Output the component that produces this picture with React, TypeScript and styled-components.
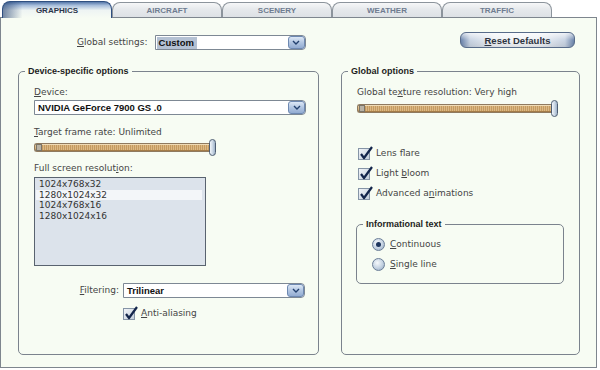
import React from "react";
import styled, { createGlobalStyle } from "styled-components";

const GlobalStyle = createGlobalStyle`
  html, body { margin: 0; padding: 0; background: #ffffff; }
  body { width: 600px; height: 370px; overflow: hidden; font-family: "DejaVu Sans", Verdana, sans-serif; }
  u { text-decoration-thickness: 1px; text-underline-offset: 1px; }
`;

const Root = styled.div`
  width: 600px;
  height: 370px;
  display: flex;
  flex-direction: column;
  background: #ffffff;
`;

const TabBar = styled.div`
  display: flex;
  align-items: flex-end;
  height: 17px;
  padding-left: 2px;
  position: relative;
  z-index: 1;
`;

const Tab = styled.div<{ $active?: boolean }>`
  width: 110px;
  height: ${(p) => (p.$active ? 17 : 15)}px;
  margin-bottom: ${(p) => (p.$active ? -1 : 0)}px;
  box-sizing: border-box;
  display: flex;
  align-items: center;
  justify-content: center;
  padding-top: ${(p) => (p.$active ? 1 : 0)}px;
  font: bold 8px "Liberation Sans", Arial, sans-serif;
  color: ${(p) => (p.$active ? "#2b364b" : "#6f7c90")};
  border: 1px solid ${(p) => (p.$active ? "#2f4f80" : "#8c949c")};
  border-bottom: none;
  border-radius: 8px 8px 0 0;
  background: ${(p) =>
    p.$active
      ? "linear-gradient(90deg, rgba(30,60,110,0.6) 0, rgba(30,60,110,0) 18%), linear-gradient(to bottom, #5678aa 0, #a9bfdc 22%, #eef4f3 52%, #f7fcf3 100%)"
      : "linear-gradient(to bottom, #f6f7f8 0, #e6e9ec 45%, #dde1e5 100%)"};
`;

const Panel = styled.div`
  width: 597px;
  height: 351px;
  box-sizing: border-box;
  border: 1px solid #7e868e;
  background: #f7fcf3;
  display: flex;
  flex-direction: column;
  padding-top: 14px;
`;

const TopRow = styled.div`
  display: flex;
  align-items: flex-start;
  height: 18px;
  padding-left: 76px;
  padding-right: 21px;
`;

const Label = styled.span<{ $mt?: number }>`
  display: block;
  margin-top: ${(p) => p.$mt ?? 0}px;
  font-size: 9px;
  line-height: 11px;
  color: #454545;
  white-space: nowrap;
`;

const InlineLabel = styled(Label)`
  display: inline-block;
`;

const Select = styled.div<{ $w: number; $mt?: number; $ml?: number }>`
  width: ${(p) => p.$w}px;
  height: 15px;
  margin-top: ${(p) => p.$mt ?? 0}px;
  margin-left: ${(p) => p.$ml ?? 0}px;
  box-sizing: border-box;
  border: 1px solid #7d8894;
  border-radius: 0 4px 4px 0;
  background: #ffffff;
  display: flex;
  align-items: center;
  justify-content: space-between;
  flex-shrink: 0;
`;

const SelectValue = styled.span<{ $sel?: boolean }>`
  font: bold 9.5px "Liberation Sans", Arial, sans-serif;
  color: #111;
  padding: 1px 3px 1px 2px;
  margin-left: 1px;
  line-height: 10px;
  background: ${(p) => (p.$sel ? "#b4c1d3" : "transparent")};
`;

const ArrowBtn = styled.div`
  width: 17px;
  height: 13px;
  box-sizing: border-box;
  border: 1px solid #6e89b2;
  border-radius: 3px;
  background: linear-gradient(to bottom, #dde8f6 0, #b2c6e2 50%, #93acd2 100%);
  display: flex;
  align-items: center;
  justify-content: center;
`;

const ResetButton = styled.div`
  margin-left: auto;
  width: 115px;
  height: 16px;
  box-sizing: border-box;
  border: 1px solid #586c8a;
  border-radius: 6px;
  display: flex;
  align-items: center;
  justify-content: center;
  font: bold 9.5px "Liberation Sans", Arial, sans-serif;
  color: #2e3440;
  background: linear-gradient(to bottom, rgba(255, 255, 255, 0.7) 0, rgba(255, 255, 255, 0) 50%, rgba(0, 0, 0, 0.08) 100%),
    linear-gradient(90deg, #6d86ad 0, #c9d4e3 8%, #eef1f5 30%, #f2f4f7 50%, #eef1f5 70%, #c9d4e3 92%, #6d86ad 100%);
`;

const GroupsRow = styled.div`
  display: flex;
  gap: 22px;
  padding-left: 17px;
  margin-top: 21px;
`;

const Group = styled.div<{ $w: number; $h: number; $mt?: number; $ml?: number }>`
  position: relative;
  width: ${(p) => p.$w}px;
  height: ${(p) => p.$h}px;
  margin-top: ${(p) => p.$mt ?? 0}px;
  margin-left: ${(p) => p.$ml ?? 0}px;
  box-sizing: border-box;
  border: 1px solid #7b838d;
  border-radius: 5px;
  display: flex;
  flex-direction: column;
  padding-left: 15px;
`;

const GroupTitle = styled.span`
  position: absolute;
  top: -6px;
  left: 6px;
  padding: 0 3px;
  background: #f7fcf3;
  font: bold 9px "Liberation Sans", Arial, sans-serif;
  line-height: 11px;
  color: #1d1d1d;
`;

const Slider = styled.div<{ $w: number; $mt?: number }>`
  width: ${(p) => p.$w}px;
  height: 17px;
  margin-top: ${(p) => p.$mt ?? 0}px;
  display: flex;
  align-items: center;
`;

const Track = styled.div`
  flex: 1;
  height: 9px;
  box-sizing: border-box;
  border: 1px solid #8f7a5f;
  border-right: none;
  border-radius: 3px 0 0 3px;
  background: repeating-linear-gradient(90deg, #dcb984 0 1px, #c59b60 1px 2px);
  box-shadow: inset 0 1px 0 #f0dcb6, inset 0 -1px 0 #a47c48;
  display: flex;
  align-items: center;
`;

const TrackCap = styled.span`
  width: 4px;
  height: 5px;
  margin-left: 1px;
  background: #b9b3a6;
  border: 1px solid #7b7568;
`;

const Thumb = styled.div`
  width: 7px;
  height: 17px;
  box-sizing: border-box;
  border: 1px solid #4d5d72;
  border-radius: 4px;
  background: linear-gradient(90deg, #f2f6fa 0, #cdd9e6 50%, #9fb2c8 100%);
`;

const ListBox = styled.div`
  width: 172px;
  height: 89px;
  margin-top: 3px;
  box-sizing: border-box;
  border: 1px solid #59636f;
  background: #dce3eb;
  padding: 1px 3px 0 1px;
`;

const ListItem = styled.div<{ $hl?: boolean }>`
  height: 10.5px;
  line-height: 10.5px;
  font-size: 9px;
  color: #333;
  padding-left: 3px;
  background: ${(p) => (p.$hl ? "#f3f6f9" : "transparent")};
`;

const FilterRow = styled.div<{ $mt?: number }>`
  display: flex;
  align-items: center;
  justify-content: flex-end;
  gap: 4px;
  width: 271px;
  margin-top: ${(p) => p.$mt ?? 0}px;
`;

const CheckRow = styled.div<{ $mt?: number; $ml?: number; $gap?: number }>`
  display: flex;
  align-items: center;
  gap: ${(p) => p.$gap ?? 6}px;
  height: 13px;
  margin-top: ${(p) => p.$mt ?? 0}px;
  margin-left: ${(p) => p.$ml ?? 0}px;
`;

const Box = styled.span`
  position: relative;
  width: 12px;
  height: 12px;
  box-sizing: border-box;
  border: 1px solid #8594a6;
  background: linear-gradient(135deg, #f1f4f8 0, #c4cfdb 100%);
  flex-shrink: 0;
  & > svg {
    position: absolute;
    left: 0;
    top: -4px;
    overflow: visible;
  }
`;

const RadioDot = styled.span`
  width: 13px;
  height: 13px;
  box-sizing: border-box;
  border-radius: 50%;
  border: 1px solid #6b7e98;
  background: radial-gradient(circle at 40% 35%, #f6f9fc 0, #c3d1e1 55%, #8ea3bd 100%);
  display: flex;
  align-items: center;
  justify-content: center;
  flex-shrink: 0;
`;

const RadioInner = styled.span`
  width: 5px;
  height: 5px;
  border-radius: 50%;
  background: #1d355d;
`;

const RadioList = styled.div`
  display: flex;
  flex-direction: column;
`;

const Chevron = () => (
  <svg width="8" height="5" viewBox="0 0 8 5">
    <path d="M1 1 L4 4 L7 1" fill="none" stroke="#22406e" strokeWidth="1.4" />
  </svg>
);

const Dropdown: React.FC<{ w: number; value: string; sel?: boolean; mt?: number; ml?: number }> = ({ w, value, sel, mt, ml }) => (
  <Select $w={w} $mt={mt} $ml={ml}>
    <SelectValue $sel={sel}>{value}</SelectValue>
    <ArrowBtn>
      <Chevron />
    </ArrowBtn>
  </Select>
);

const Check: React.FC<{ children: React.ReactNode; mt?: number; ml?: number }> = ({ children, mt, ml }) => (
  <CheckRow $mt={mt} $ml={ml}>
    <Box>
      <svg width="14" height="15" viewBox="0 0 14 15">
        <path d="M2 9 L5 13 L13 2" fill="none" stroke="#13254a" strokeWidth="2.2" strokeLinejoin="round" />
      </svg>
    </Box>
    <InlineLabel>{children}</InlineLabel>
  </CheckRow>
);

const Radio: React.FC<{ children: React.ReactNode; on?: boolean; mt?: number }> = ({ children, on, mt }) => (
  <CheckRow $mt={mt} $ml={0} $gap={5}>
    <RadioDot>{on && <RadioInner />}</RadioDot>
    <InlineLabel>{children}</InlineLabel>
  </CheckRow>
);

const SliderControl: React.FC<{ w: number; mt?: number }> = ({ w, mt }) => (
  <Slider $w={w} $mt={mt}>
    <Track>
      <TrackCap />
    </Track>
    <Thumb />
  </Slider>
);

export default function App() {
  return (
    <Root>
      <GlobalStyle />
      <TabBar>
        <Tab $active>GRAPHICS</Tab>
        <Tab>AIRCRAFT</Tab>
        <Tab>SCENERY</Tab>
        <Tab>WEATHER</Tab>
        <Tab>TRAFFIC</Tab>
      </TabBar>
      <Panel>
        <TopRow>
          <InlineLabel style={{ marginTop: 5 }}>
            <u>G</u>lobal settings:
          </InlineLabel>
          <Dropdown w={151} value="Custom" sel mt={3} ml={7} />
          <ResetButton>
            <span>
              <u>R</u>eset Defaults
            </span>
          </ResetButton>
        </TopRow>
        <GroupsRow>
          <Group $w={301} $h={284}>
            <GroupTitle>Device-specific options</GroupTitle>
            <Label $mt={15}>
              <u>D</u>evice:
            </Label>
            <Dropdown w={272} value="NVIDIA GeForce 7900 GS .0" mt={2} />
            <Label $mt={12}>
              <u>T</u>arget frame rate: Unlimited
            </Label>
            <SliderControl w={182} mt={1} />
            <Label $mt={7}>
              Full screen resolut<u>i</u>on:
            </Label>
            <ListBox>
              <ListItem>1024x768x32</ListItem>
              <ListItem $hl>1280x1024x32</ListItem>
              <ListItem>1024x768x16</ListItem>
              <ListItem>1280x1024x16</ListItem>
            </ListBox>
            <FilterRow $mt={17}>
              <InlineLabel>
                <u>F</u>iltering:
              </InlineLabel>
              <Dropdown w={182} value="Trilinear" />
            </FilterRow>
            <Check mt={9} ml={89}>
              <u>A</u>nti-aliasing
            </Check>
          </Group>
          <Group $w={239} $h={284}>
            <GroupTitle>Global options</GroupTitle>
            <Label $mt={15}>
              Global te<u>x</u>ture resolution: Very high
            </Label>
            <SliderControl w={201} mt={2} />
            <Check mt={30} ml={1}>
              Lens f<u>l</u>are
            </Check>
            <Check mt={7} ml={1}>
              Light <u>b</u>loom
            </Check>
            <Check mt={7} ml={1}>
              Advanced a<u>n</u>imations
            </Check>
            <Group $w={208} $h={60} $mt={24} $ml={-1}>
              <GroupTitle>Informational text</GroupTitle>
              <RadioList>
                <Radio on mt={13}>
                  <u>C</u>ontinuous
                </Radio>
                <Radio mt={7}>
                  <u>S</u>ingle line
                </Radio>
              </RadioList>
            </Group>
          </Group>
        </GroupsRow>
      </Panel>
    </Root>
  );
}
